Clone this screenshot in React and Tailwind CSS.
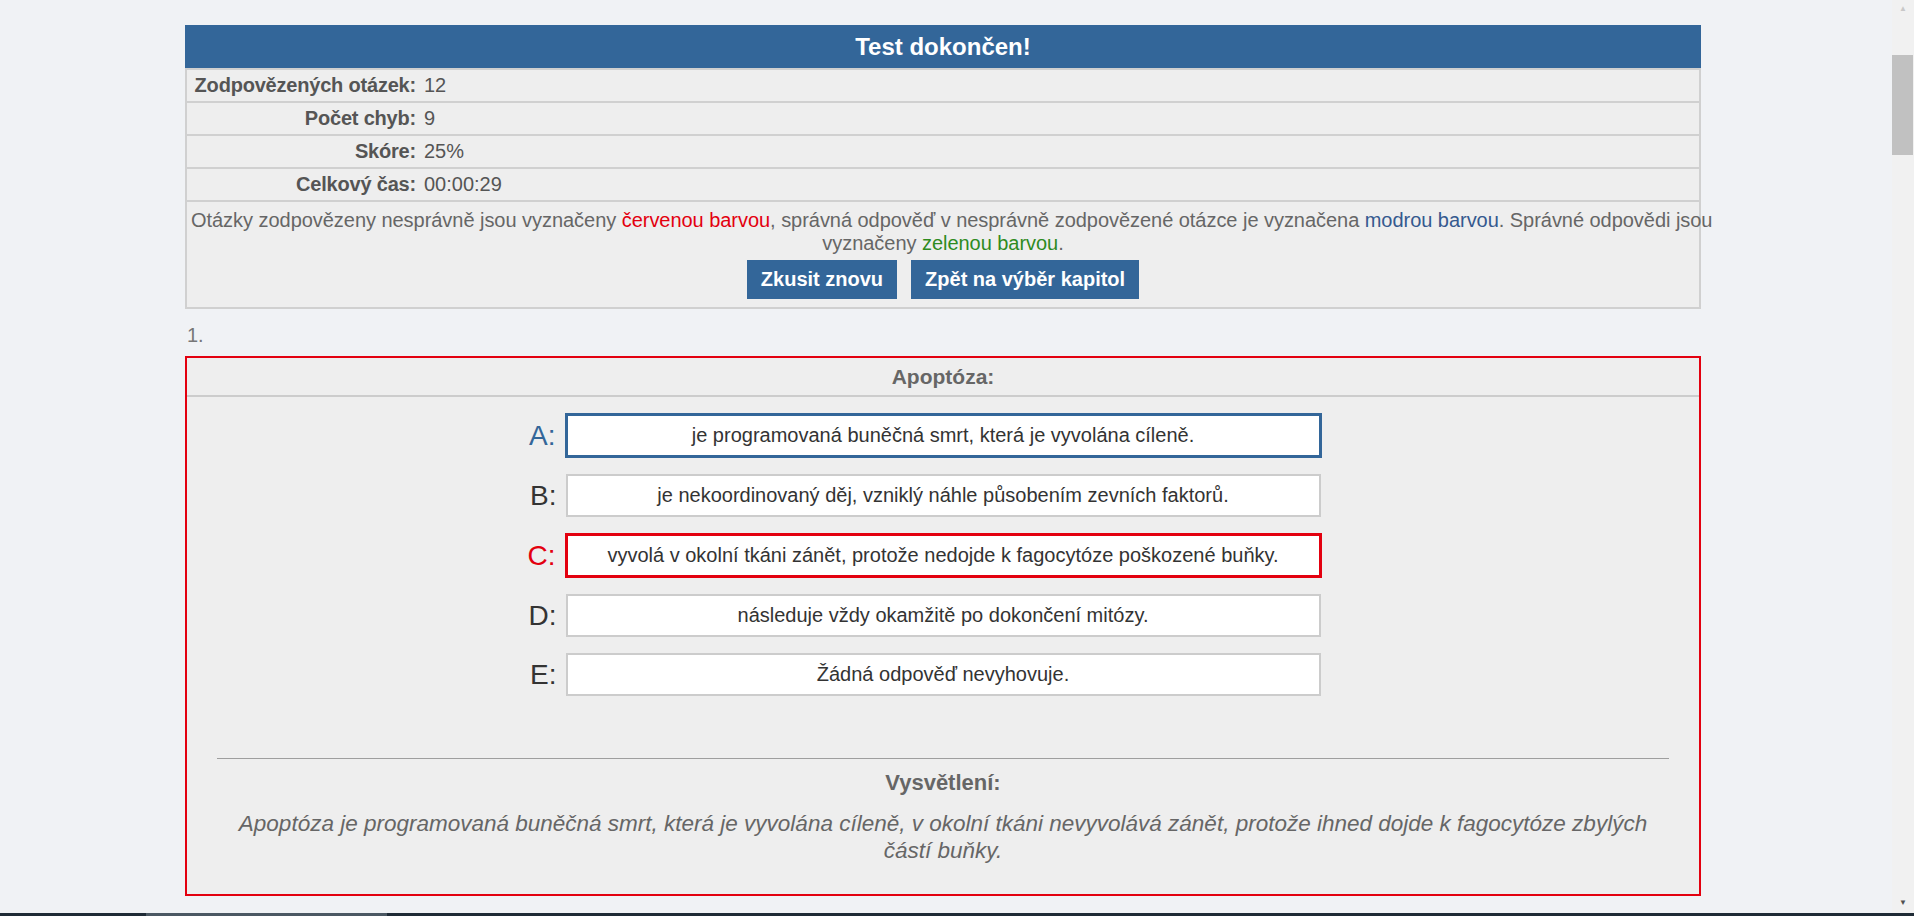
import React from "react";

const options = [
  { k: "A", text: "je programovaná buněčná smrt, která je vyvolána cíleně.", kind: "blue" },
  { k: "B", text: "je nekoordinovaný děj, vzniklý náhle působením zevních faktorů.", kind: "plain" },
  { k: "C", text: "vyvolá v okolní tkáni zánět, protože nedojde k fagocytóze poškozené buňky.", kind: "red" },
  { k: "D", text: "následuje vždy okamžitě po dokončení mitózy.", kind: "plain" },
  { k: "E", text: "Žádná odpověď nevyhovuje.", kind: "plain" },
];

function StatRow({ label, value }) {
  return (
    <div className="flex h-[33px] items-center border-t-2 border-[#d0d0d0] leading-[23px]">
      <div className="w-[233px] shrink-0 pr-[4px] text-right font-bold tracking-[-0.2px] text-[#555555]">
        {label}
      </div>
      <div className="pl-[4px] text-[#555555]">{value}</div>
    </div>
  );
}

function Option({ k, text, kind }) {
  const labelColor =
    kind === "blue" ? "text-[#336699]" : kind === "red" ? "text-[#e3000f]" : "text-[#333333]";
  const boxBorder =
    kind === "blue"
      ? "border-[3px] border-[#336699]"
      : kind === "red"
      ? "border-[3px] border-[#e3000f]"
      : "border-2 border-[#cccccc]";
  return (
    <div className="grid grid-cols-[1fr_auto_1fr] items-center">
      <div className={`pr-[9px] text-right text-[28px] leading-[32px] ${labelColor}`}>{k}:</div>
      <div
        className={`box-content w-[751px] bg-white py-[8px] text-center text-[20px] leading-[23px] text-[#333333] ${boxBorder}`}
      >
        {text}
      </div>
      <div />
    </div>
  );
}

export default function App() {
  return (
    <div
      className="flex h-[916px] w-full flex-col overflow-hidden bg-[#f0f2f5] text-[20px]"
      style={{ fontFamily: '"Liberation Sans", Arial, sans-serif' }}
    >
      <div className="flex min-h-0 flex-1">
        <div className="min-w-0 flex-1 overflow-hidden pl-[185px] pt-[25px]">
          <div className="w-[1516px]">
            {/* Summary */}
            <div className="flex h-[43px] items-center justify-center bg-[#336699] text-[24px] font-bold text-white">
              Test dokončen!
            </div>
            <div className="border-x-2 border-b-2 border-[#d0d0d0] bg-[#eeeeee]">
              <StatRow label="Zodpovězených otázek:" value="12" />
              <StatRow label="Počet chyb:" value="9" />
              <StatRow label="Skóre:" value="25%" />
              <StatRow label="Celkový čas:" value="00:00:29" />
              <div className="border-t-2 border-[#d0d0d0] px-[4px] pb-[8px] pt-[7px] text-center leading-[23px] text-[#666666]">
                <p className="whitespace-nowrap tracking-[-0.04px]">
                  Otázky zodpovězeny nesprávně jsou vyznačeny{" "}
                  <span className="text-[#e3000f]">červenou barvou</span>, správná odpověď v nesprávně
                  zodpovězené otázce je vyznačena <span className="text-[#35598f]">modrou barvou</span>.
                  Správné odpovědi jsou
                  <br />
                  vyznačeny <span className="text-[#2e8b1e]">zelenou barvou</span>.
                </p>
                <div className="mt-[5px] flex justify-center gap-[14px]">
                  <button className="h-[39px] bg-[#336699] px-[14px] font-bold text-white">
                    Zkusit znovu
                  </button>
                  <button className="h-[39px] bg-[#336699] px-[14px] font-bold text-white">
                    Zpět na výběr kapitol
                  </button>
                </div>
              </div>
            </div>

            {/* Question 1 */}
            <div className="mb-[9px] ml-[2px] mt-[15px] leading-[23px] text-[#777777]">1.</div>
            <div className="border-2 border-[#e3000f] bg-[#eeeeee]">
              <div className="flex h-[39px] items-center justify-center border-b-2 border-[#cccccc] text-[21px] font-bold text-[#666666]">
                Apoptóza:
              </div>
              <div className="flex flex-col gap-[16px] pt-[16px]">
                {options.map((o) => (
                  <Option key={o.k} {...o} />
                ))}
              </div>
              <div className="mx-[30px] mt-[62px] border-t border-[#9e9e9e]" />
              <div className="mt-[11px] text-center text-[22px] font-bold leading-[26px] text-[#666666]">
                Vysvětlení:
              </div>
              <p className="mt-[14px] whitespace-nowrap px-[20px] pb-[30px] text-center text-[22.5px] italic leading-[27px] text-[#666666]">
                Apoptóza je programovaná buněčná smrt, která je vyvolána cíleně, v okolní tkáni nevyvolává
                zánět, protože ihned dojde k fagocytóze zbylých
                <br />
                částí buňky.
              </p>
            </div>
          </div>
        </div>

        {/* Scrollbar */}
        <div className="flex w-[22px] shrink-0 flex-col items-center bg-[#f1f1f1]">
          <div className="flex h-[17px] w-full items-center justify-center text-[8px] leading-none text-[#c8c8c8]">
            ▲
          </div>
          <div className="mt-[38px] h-[100px] w-[21px] self-start bg-[#c1c1c1]" />
          <div className="flex-1" />
          <div className="flex h-[17px] w-full items-center justify-center pb-[4px] text-[8px] leading-none text-[#505050]">
            ▼
          </div>
        </div>
      </div>

      {/* Bottom strip */}
      <div className="flex h-[3px] shrink-0 bg-[#1f2b36]">
        <div className="ml-[146px] w-[241px] bg-[#4b5863]" />
      </div>
    </div>
  );
}
